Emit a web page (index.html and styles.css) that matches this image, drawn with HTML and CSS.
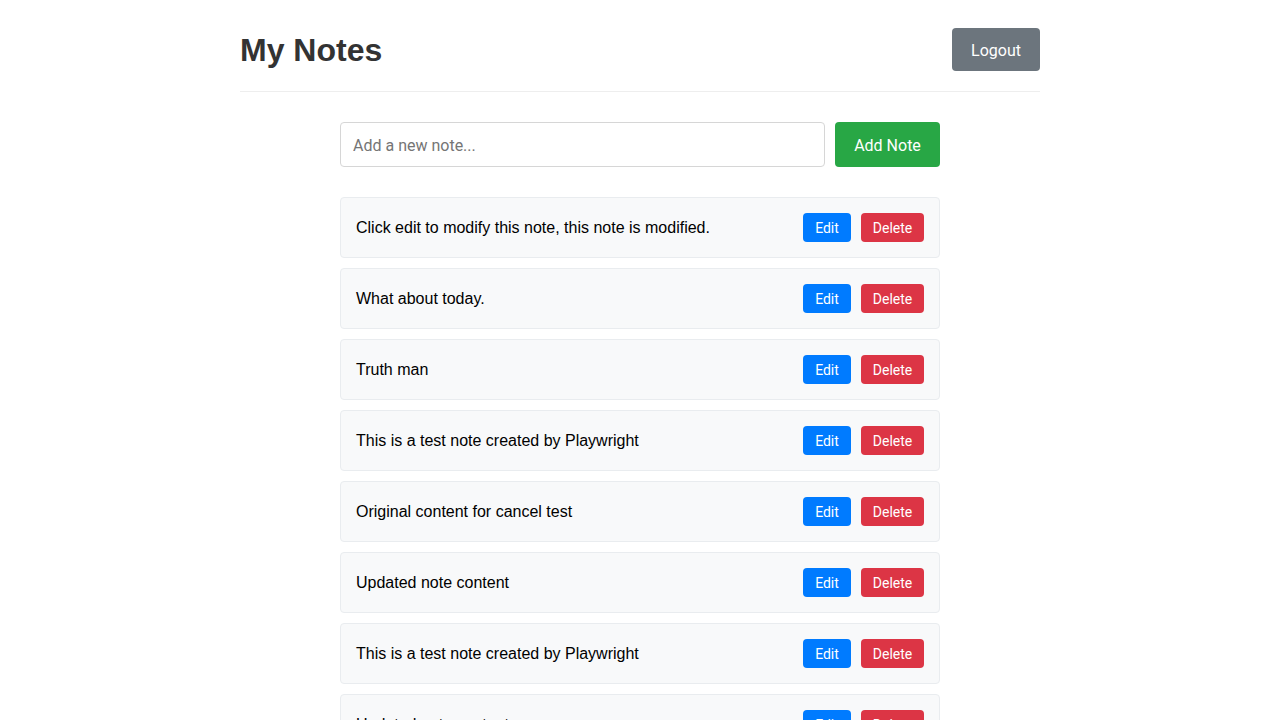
FILE: index.html
```html
<!DOCTYPE html>
<html lang="en">
<head>
<meta charset="utf-8">
<title>My Notes</title>
<link rel="stylesheet" href="styles.css">
</head>
<body>
<div class="container">
  <header class="header">
    <h1 class="title">My Notes</h1>
    <button class="btn btn-logout">Logout</button>
  </header>
  <main class="main">
    <form class="add-form">
      <input class="note-input" type="text" placeholder="Add a new note...">
      <button type="button" class="btn btn-add">Add Note</button>
    </form>
    <ul class="notes">
      <li class="note"><span class="note-text">Click edit to modify this note, this note is modified.</span><div class="actions"><button class="btn-sm btn-edit">Edit</button><button class="btn-sm btn-delete">Delete</button></div></li>
      <li class="note"><span class="note-text">What about today.</span><div class="actions"><button class="btn-sm btn-edit">Edit</button><button class="btn-sm btn-delete">Delete</button></div></li>
      <li class="note"><span class="note-text">Truth man</span><div class="actions"><button class="btn-sm btn-edit">Edit</button><button class="btn-sm btn-delete">Delete</button></div></li>
      <li class="note"><span class="note-text">This is a test note created by Playwright</span><div class="actions"><button class="btn-sm btn-edit">Edit</button><button class="btn-sm btn-delete">Delete</button></div></li>
      <li class="note"><span class="note-text">Original content for cancel test</span><div class="actions"><button class="btn-sm btn-edit">Edit</button><button class="btn-sm btn-delete">Delete</button></div></li>
      <li class="note"><span class="note-text">Updated note content</span><div class="actions"><button class="btn-sm btn-edit">Edit</button><button class="btn-sm btn-delete">Delete</button></div></li>
      <li class="note"><span class="note-text">This is a test note created by Playwright</span><div class="actions"><button class="btn-sm btn-edit">Edit</button><button class="btn-sm btn-delete">Delete</button></div></li>
      <li class="note"><span class="note-text">Updated note content</span><div class="actions"><button class="btn-sm btn-edit">Edit</button><button class="btn-sm btn-delete">Delete</button></div></li>
    </ul>
  </main>
</div>
</body>
</html>
```
FILE: styles.css
```css
* { box-sizing: border-box; }
body {
  margin: 8px;
  font-family: "Liberation Sans", Arial, sans-serif;
  font-size: 16px;
  color: #000;
  background: #fff;
}
.container {
  max-width: 800px;
  margin: 0 auto;
  padding: 20px 0;
}
.header {
  display: flex;
  justify-content: space-between;
  align-items: center;
  padding-bottom: 20px;
  border-bottom: 1px solid #eee;
  margin-bottom: 30px;
}
.title {
  margin: 1px 0 0;
  font-size: 32px;
  font-weight: bold;
  color: #333;
}
.btn {
  font-family: Roboto, "Noto Sans", sans-serif;
  font-size: 16px;
  line-height: 23px;
  color: #fff;
  border: none;
  border-radius: 4px;
  cursor: pointer;
  white-space: nowrap;
}
.btn-logout {
  background: #6c757d;
  height: 43px;
  width: 88px;
  padding: 1px 0 0;
}
.main {
  max-width: 600px;
  margin: 0 auto;
}
.add-form {
  display: flex;
  gap: 10px;
  margin: 0 0 30px;
}
.note-input {
  flex: 1;
  height: 45px;
  padding: 1px 12px 0;
  border: 1px solid #d6d6d6;
  border-radius: 4px;
  font-family: Roboto, "Noto Sans", sans-serif;
  font-size: 16px;
}
.note-input::placeholder { color: #757575; }
.btn-add {
  background: #28a745;
  padding: 2px 0 0;
  height: 45px;
  width: 105px;
}
.notes {
  list-style: none;
  margin: 0;
  padding: 0;
  display: flex;
  flex-direction: column;
  gap: 10px;
}
.note {
  display: flex;
  justify-content: space-between;
  align-items: center;
  padding: 15px;
  background: #f8f9fa;
  border: 1px solid #e9ecef;
  border-radius: 4px;
}
.actions {
  display: flex;
  gap: 10px;
}
.btn-sm {
  font-family: Roboto, "Noto Sans", sans-serif;
  font-size: 14px;
  line-height: 19px;
  padding: 2px 0 0;
  height: 29px;
  color: #fff;
  border: none;
  border-radius: 4px;
  cursor: pointer;
}
.btn-edit { background: #007bff; width: 48px; }
.btn-delete { background: #dc3545; width: 63px; }
```
